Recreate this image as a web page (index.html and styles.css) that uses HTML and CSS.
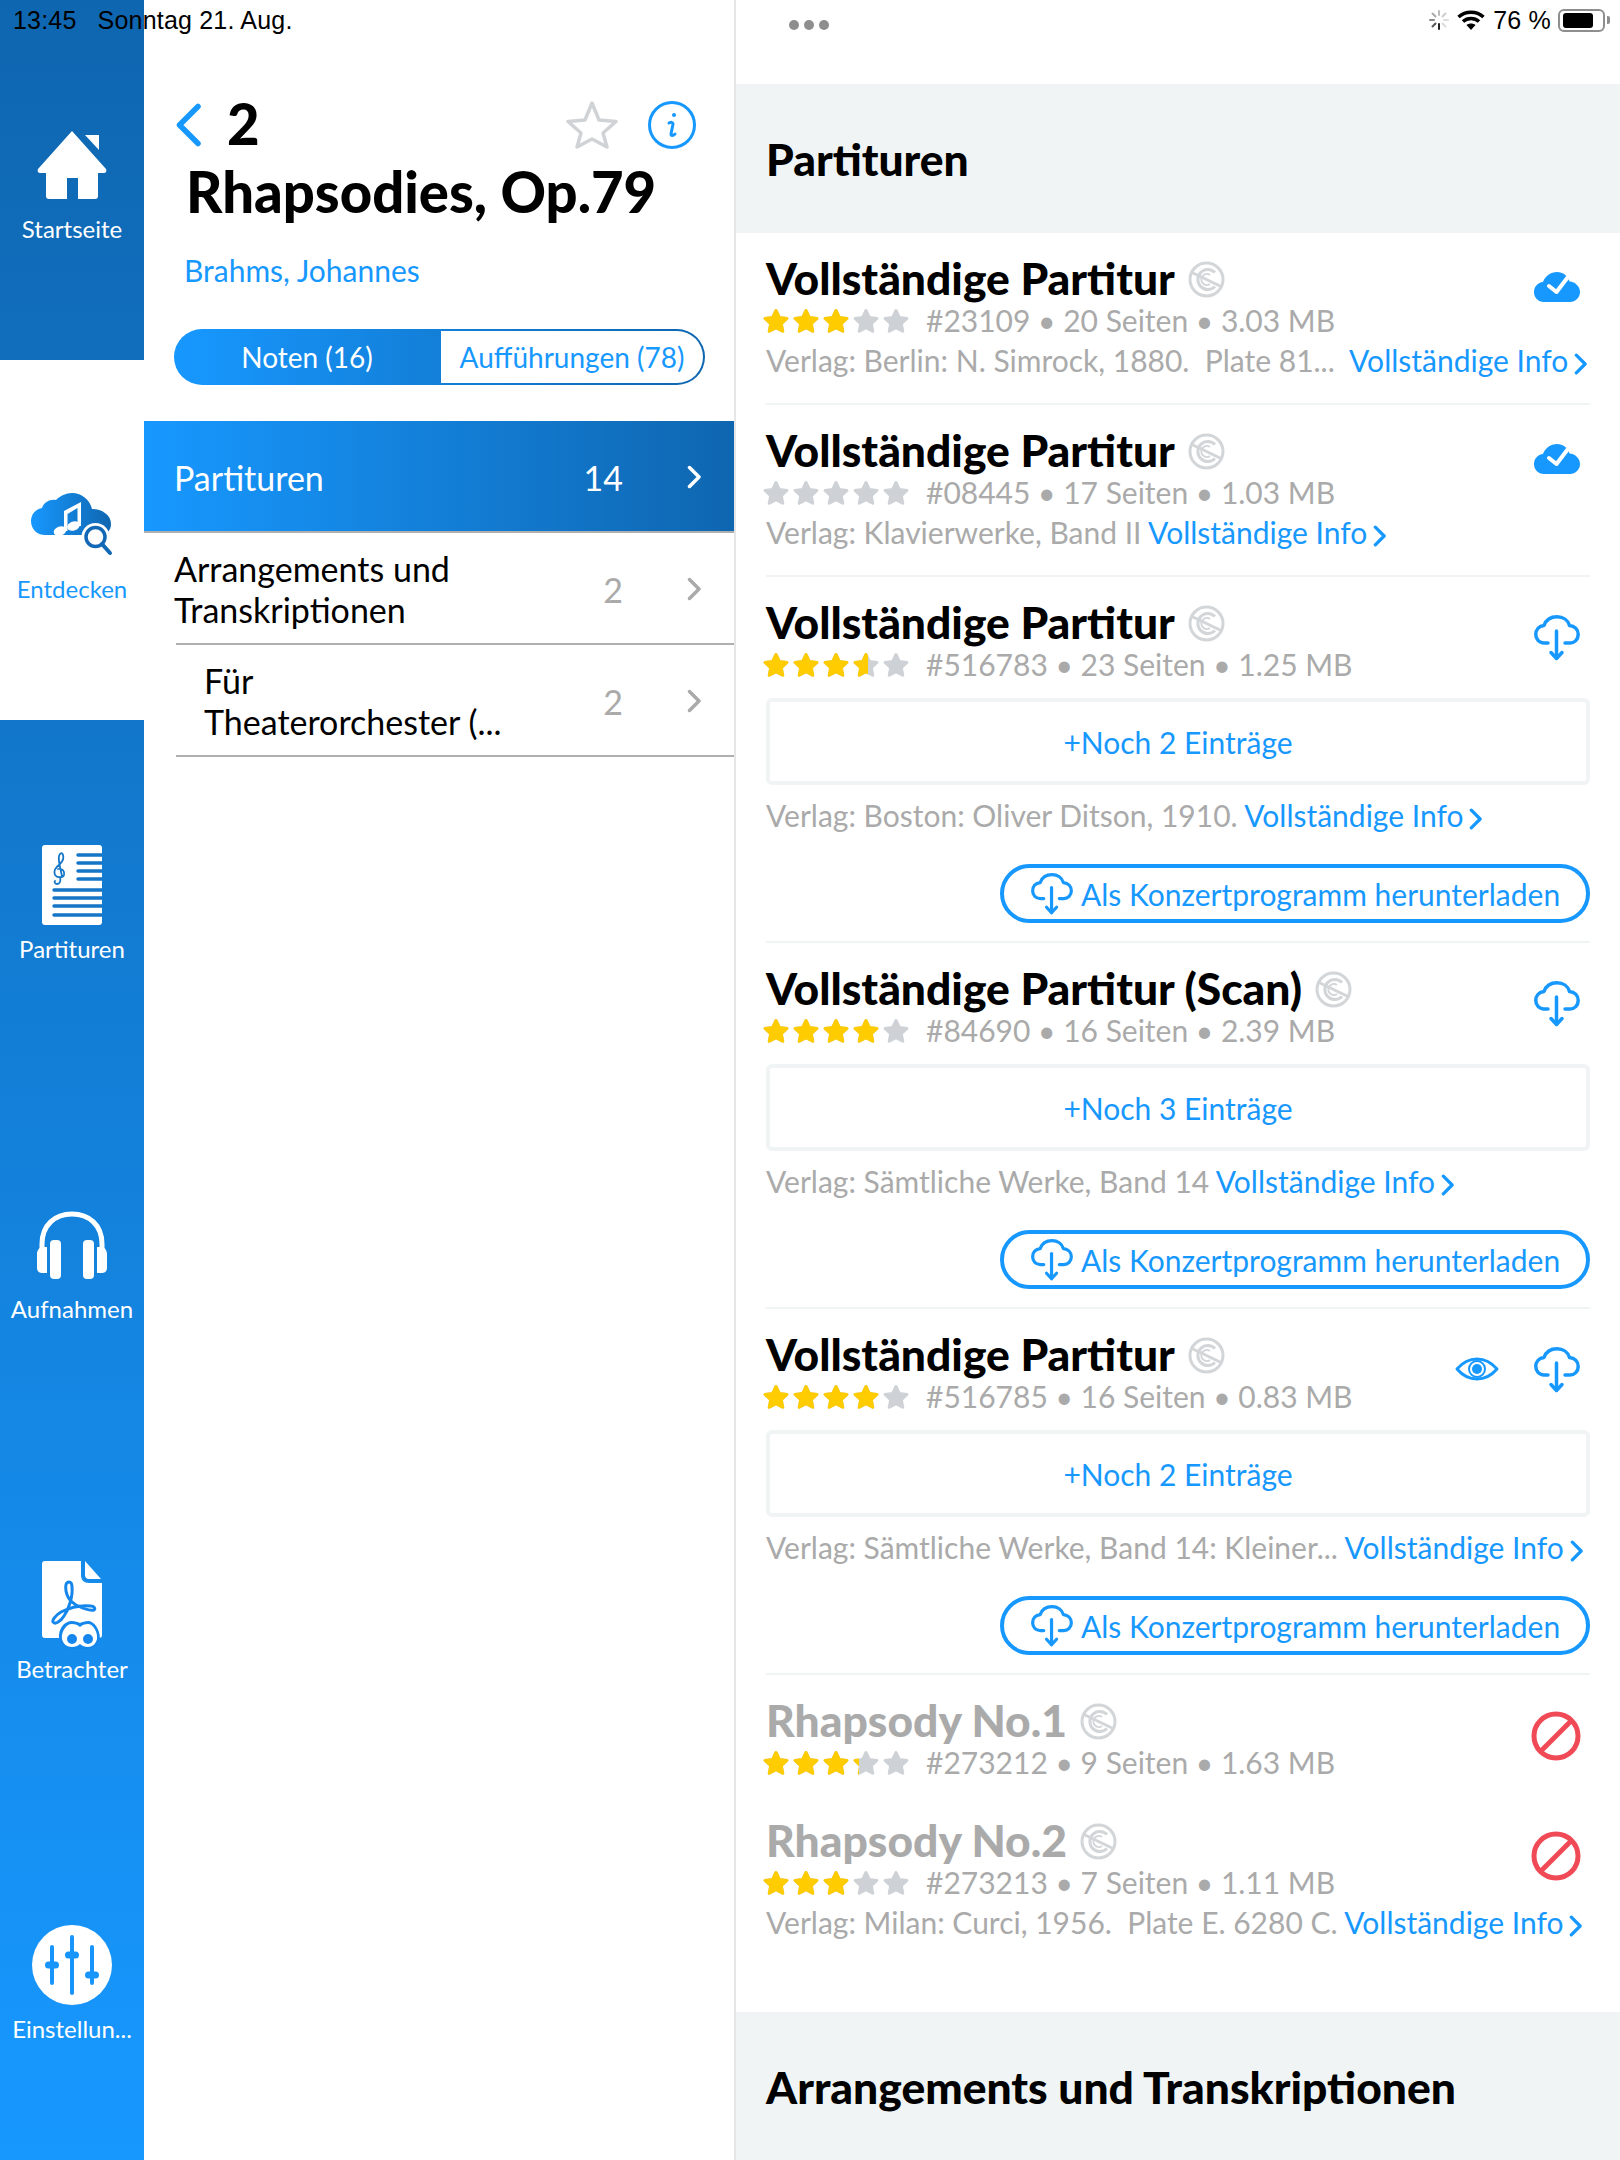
FILE: index.html
```html
<!DOCTYPE html>
<html lang="de">
<head>
    <meta charset="UTF-8">
    <meta name="viewport" content="width=device-width, initial-scale=1.0">
    <title>Rhapsodies, Op.79</title>
    <link rel="stylesheet" href="styles.css">
</head>
<body>
    <svg class="defs" width="0" height="0">
        <defs>
            <symbol id="star-row" viewBox="0 0 146 26">
                <g stroke="currentColor" stroke-width="3" stroke-linejoin="round">
                    <path d="M13 2.500l3.300 6.970 7.600.98-5.600 5.250 1.460 7.600L13 19.600l-6.760 3.700 1.460-7.600-5.640-5.250 7.640-.98z" />
                    <path d="M43 2.500l3.300 6.970 7.600.98-5.600 5.250 1.460 7.600L43 19.600l-6.760 3.700 1.460-7.600-5.640-5.250 7.640-.98z" />
                    <path d="M73 2.500l3.300 6.970 7.600.98-5.600 5.250 1.460 7.600L73 19.600l-6.760 3.700 1.460-7.600-5.640-5.250 7.640-.98z" />
                    <path d="M103 2.500l3.300 6.970 7.600.98-5.600 5.250 1.460 7.600L103 19.600l-6.760 3.700 1.460-7.600-5.640-5.250 7.640-.98z" />
                    <path d="M133 2.500l3.300 6.970 7.600.98-5.600 5.250 1.460 7.600L133 19.600l-6.760 3.700 1.460-7.600-5.640-5.250 7.640-.98z" />
                </g>
            </symbol>
            <symbol id="cc" viewBox="0 0 37 37">
                <g fill="none" stroke="#d3d6d8" stroke-width="3">
                    <circle cx="18.500" cy="18.500" r="16.500" />
                    <path d="M27 11.500a10 10 0 1 0 0 14" />
                    <path d="M22 14a5.500 5.500 0 1 0 0 9" stroke-width="2" />
                    <path d="M4 11.500l29 14" />
                </g>
            </symbol>
            <symbol id="cloud-down" viewBox="0 0 46 46">
                <g fill="none" stroke="#1798ff" stroke-width="3.500" stroke-linecap="round" stroke-linejoin="round">
                    <path d="M14 28H10C5 28 1.800 24 1.800 19.500 1.800 14.500 5 11 10 10.500 12 5 17 1.800 23 1.800 29 1.800 34 5 35.500 10.500 40.500 11 44.200 14.500 44.200 19.500 44.200 24.500 40.500 28 36 28H31" />
                    <path d="M22.500 16V43" />
                    <path d="M17 37.500l5.500 6 5.500-6" />
                </g>
            </symbol>
            <symbol id="cloud-ok" viewBox="0 0 46 31">
                <path fill="#1798ff" d="M10 31C4 31 0 26.500 0 21 0 15.500 4 11.500 9 11 11 5 17 1 23 1 29 1 34 5 35.500 10.500 41.500 11 46 15.500 46 21 46 26.500 41.500 31 36 31z" />
                <path fill="none" stroke="#fff" stroke-width="4" stroke-linecap="round" stroke-linejoin="round" d="M15 15l7.500 6L37 2" />
            </symbol>
            <symbol id="no" viewBox="0 0 50 50">
                <g fill="none" stroke="#ef4a55" stroke-width="5">
                    <circle cx="25" cy="25" r="22" />
                    <path d="M10 40L40 10" />
                </g>
            </symbol>
            <symbol id="chev" viewBox="0 0 14 24">
                <path fill="none" stroke="currentColor" stroke-width="3.500" stroke-linecap="round" stroke-linejoin="round" d="M2.500 2.500L12 12l-9.500 9.500" />
            </symbol>
        </defs>
    </svg>

    <div class="status-left"><span>13:45</span><span>Sonntag 21. Aug.</span></div>

    <div class="app">
        <nav class="tabs">
            <div class="tab">
                <div class="tab-icon">
                    <svg width="70" height="68" viewBox="0 0 70 68">
                        <path fill="#fff" d="M35 0L69 38c1 2 0 4-2 4h-6v23c0 2-1 3-3 3H41V47H30v21H12c-2 0-3-1-3-3V42H3c-2 0-3-2-2-4z" />
                        <path fill="#fff" d="M48 4h14v15z" />
                    </svg>
                </div>
                <div class="tab-label">Startseite</div>
            </div>
            <div class="tab tab-active">
                <div class="tab-icon">
                    <svg width="82" height="64" viewBox="0 0 82 64">
                        <defs>
                            <linearGradient id="cloud-grad"><stop offset="0" stop-color="#1798ff" /><stop offset="1" stop-color="#0f66b0" /></linearGradient>
                        </defs>
                        <path fill="url(#cloud-grad)" d="M14 42C6 42 0 36 0 28 0 21 5 16 11 15 13 9 19 6 25 7 29 3 35 0 41 0 51 0 59 7 61 16 71 16 80 22 80 31 80 37 76 42 70 42z" />
                        <g fill="#fff">
                            <path d="M33 18L50 9V33H46.500V15L36.500 21V38H33z" />
                            <ellipse cx="42.500" cy="33" rx="6.500" ry="4.500" transform="rotate(-20 42.500 33)" />
                            <ellipse cx="29" cy="38" rx="6.500" ry="4.500" transform="rotate(-20 29 38)" />
                        </g>
                        <circle cx="64.500" cy="44" r="14" fill="#fff" />
                        <circle cx="64.500" cy="44" r="9.500" fill="none" stroke="#1268b4" stroke-width="3.500" />
                        <path d="M71 51l8 9" stroke="#1268b4" stroke-width="4" stroke-linecap="round" />
                    </svg>
                </div>
                <div class="tab-label">Entdecken</div>
            </div>
            <div class="tab">
                <div class="tab-icon">
                    <svg width="60" height="80" viewBox="0 0 60 80">
                        <rect width="60" height="80" rx="3" fill="#fff" />
                        <g fill="none" stroke="#1576c8" stroke-width="3.500" stroke-linecap="round">
                            <path d="M36 10H60M36 18H60M36 26H60M36 34H60M12 45H60M12 53H60M12 61H60M12 70H60" />
                        </g>
                        <path fill="none" stroke="#1576c8" stroke-width="1.800" stroke-linecap="round" d="M18 32c1 4 0 7-3 7-2 0-3-2-2-3M16 24c4-1 7 2 6 6-1 3-7 3-9 0-2-4 1-8 5-11 3-3 4-6 3-9-1-3-3-2-4 1-1 4 1 12 3 20" />
                    </svg>
                </div>
                <div class="tab-label">Partituren</div>
            </div>
            <div class="tab">
                <div class="tab-icon">
                    <svg width="70" height="68" viewBox="0 0 70 68">
                        <path fill="none" stroke="#fff" stroke-width="5" d="M5 38V33C5 14 18 3 35 3s30 11 30 30v5" />
                        <rect x="13" y="29" width="11" height="39" rx="4" fill="#fff" />
                        <rect x="46" y="29" width="11" height="39" rx="4" fill="#fff" />
                        <path fill="#fff" d="M10 36v26H5c-3 0-5-2-5-5V43c0-3 2-7 5-7zM60 36v26h5c3 0 5-2 5-5V43c0-3-2-7-5-7z" />
                    </svg>
                </div>
                <div class="tab-label">Aufnahmen</div>
            </div>
            <div class="tab">
                <div class="tab-icon">
                    <svg width="60" height="88" viewBox="0 0 60 88">
                        <path fill="#fff" d="M3 0H39V14c0 5 3 8 8 8H60V74c0 2-1 3-3 3H3c-2 0-3-1-3-3V3C0 1 1 0 3 0z" />
                        <path fill="#fff" d="M43 0L59 18H47c-3 0-4-2-4-4z" />
                        <path fill="none" stroke="#1587ec" stroke-width="3" stroke-linejoin="round" d="M27 21c-3 0-4 4-3 9 1 6 5 11 10 14 6 3 14 6 18 5 2-1 0-4-3-4-8-1-20 1-30 6-5 3-9 8-8 10 2 3 8-1 11-6 5-7 9-20 8-29 0-3-1-5-3-5z" />
                        <path fill="#1587ec" d="M17 78c-1-10 5-18 13-18 3 0 6 1 8 2 2-1 5-2 8-2 6 0 12 8 12 18 0 6-6 10-12 10H29c-6 0-12-4-12-10z" />
                        <path fill="#fff" d="M20 78c-1-7 4-15 10-15 3 0 6 1 8 3 2-2 5-3 8-3 5 0 10 8 9 15-1 5-5 8-9 8-3 0-6-1-8-3-2 2-5 3-8 3-5 0-9-3-10-8z" />
                        <circle cx="30" cy="78" r="5" fill="#1587ec" />
                        <circle cx="46" cy="78" r="5" fill="#1587ec" />
                    </svg>
                </div>
                <div class="tab-label">Betrachter</div>
            </div>
            <div class="tab">
                <div class="tab-icon">
                    <svg width="80" height="80" viewBox="0 0 80 80">
                        <circle cx="40" cy="40" r="40" fill="#fff" />
                        <g stroke="#1795fa" stroke-width="4" stroke-linecap="round">
                            <path d="M20 22V58M40 12V68M60 22V58" />
                            <path d="M16.500 40H23.500M36.500 30H43.500M56.500 50H63.500" stroke-width="7" />
                        </g>
                    </svg>
                </div>
                <div class="tab-label">Einstellun...</div>
            </div>
        </nav>

        <aside class="detail">
            <div class="detail-top">
                <svg class="back" width="26" height="44" viewBox="0 0 26 44">
                    <path fill="none" stroke="#1798ff" stroke-width="5.500" stroke-linecap="round" stroke-linejoin="round" d="M22 3.500L3.500 22 22 40.500" />
                </svg>
                <div class="detail-num">2</div>
                <svg class="fav" width="52" height="48" viewBox="0 0 52 48">
                    <path fill="none" stroke="#d0d3d6" stroke-width="3.500" stroke-linejoin="round" d="M26 2l7 17 17 1.500-13 11.500 4 14-15-8-15 8 4-14L2 20.500 19 19z" />
                </svg>
                <svg width="48" height="48" viewBox="0 0 48 48">
                    <circle cx="24" cy="24" r="22.500" fill="none" stroke="#1798ff" stroke-width="3" />
                    <circle cx="26" cy="14" r="2" fill="#1798ff" />
                    <path fill="none" stroke="#1798ff" stroke-width="3" stroke-linecap="round" d="M21 22c2-1 4-1 4 1l-2 10c0 2 2 2 4 0" />
                </svg>
            </div>
            <h1 class="detail-title">Rhapsodies, Op.79</h1>
            <div class="detail-author">Brahms, Johannes</div>
            <div class="segment">
                <div class="seg-on">Noten (16)</div>
                <div class="seg-off">Aufführungen (78)</div>
            </div>
            <div class="cat-list">
                <div class="cat cat-active">
                    <div class="cat-name">Partituren</div>
                    <div class="cat-count">14</div>
                    <svg class="cat-chev" width="14" height="24"><use href="#chev" /></svg>
                </div>
                <div class="cat">
                    <div class="cat-name">Arrangements und<br>Transkriptionen</div>
                    <div class="cat-count">2</div>
                    <svg class="cat-chev" width="14" height="24"><use href="#chev" /></svg>
                </div>
                <div class="cat cat-sub">
                    <div class="cat-name">Für<br>Theaterorchester (...</div>
                    <div class="cat-count">2</div>
                    <svg class="cat-chev" width="14" height="24"><use href="#chev" /></svg>
                </div>
            </div>
        </aside>

        <main class="scores">
            <div class="topbar">
                <div class="dots"><i></i><i></i><i></i></div>
                <div class="status-right">
                    <svg width="20" height="20" viewBox="0 0 20 20">
                        <g stroke-width="2" stroke-linecap="round">
                            <path stroke="#222" d="M10 14v5" />
                            <path stroke="#555" d="M6.500 13.500L3.500 16.500" />
                            <path stroke="#888" d="M5 10H1" />
                            <path stroke="#aaa" d="M6.500 6.500L3.500 3.500" />
                            <path stroke="#bbb" d="M10 5V1" />
                            <path stroke="#ccc" d="M13.500 6.500l3-3" />
                            <path stroke="#ddd" d="M15 10h4" />
                            <path stroke="#ddd" d="M13.500 13.500l3 3" />
                        </g>
                    </svg>
                    <svg width="28" height="20" viewBox="0 0 28 20">
                        <g fill="none" stroke="#000" stroke-width="3.500">
                            <path d="M1.500 7c7-6.500 18-6.500 25 0" />
                            <path d="M6 11.500c4.500-4 11.500-4 16 0" />
                        </g>
                        <path d="M14 20l-4.500-5c2.500-2 6.500-2 9 0z" />
                    </svg>
                    <span class="batt-pct">76 %</span>
                    <div class="batt"><div class="batt-fill"></div></div>
                    <div class="batt-nub"></div>
                </div>
            </div>

            <h2 class="group-head">Partituren</h2>

            <section class="item">
                <div class="item-head">
                    <div class="item-main">
                        <div class="item-title"><span>Vollständige Partitur</span><svg width="37" height="37"><use href="#cc" /></svg></div>
                        <div class="item-meta">
                            <div class="stars"><svg width="146" height="26"><use href="#star-row" /></svg><div class="stars-on" style="width:60%"><svg width="146" height="26"><use href="#star-row" /></svg></div></div>
                            <span>#23109 • 20 Seiten • 3.03 MB</span>
                        </div>
                    </div>
                    <div class="item-actions"><svg width="46" height="31"><use href="#cloud-ok" /></svg></div>
                </div>
                <div class="item-pub">Verlag: Berlin: N. Simrock, 1880.  Plate 81...  <a class="more">Vollständige Info<svg width="13" height="24"><use href="#chev" /></svg></a></div>
            </section>

            <section class="item">
                <div class="item-head">
                    <div class="item-main">
                        <div class="item-title"><span>Vollständige Partitur</span><svg width="37" height="37"><use href="#cc" /></svg></div>
                        <div class="item-meta">
                            <div class="stars"><svg width="146" height="26"><use href="#star-row" /></svg></div>
                            <span>#08445 • 17 Seiten • 1.03 MB</span>
                        </div>
                    </div>
                    <div class="item-actions"><svg width="46" height="31"><use href="#cloud-ok" /></svg></div>
                </div>
                <div class="item-pub">Verlag: Klavierwerke, Band II <a class="more">Vollständige Info<svg width="13" height="24"><use href="#chev" /></svg></a></div>
            </section>

            <section class="item item-tall">
                <div class="item-head">
                    <div class="item-main">
                        <div class="item-title"><span>Vollständige Partitur</span><svg width="37" height="37"><use href="#cc" /></svg></div>
                        <div class="item-meta">
                            <div class="stars"><svg width="146" height="26"><use href="#star-row" /></svg><div class="stars-on" style="width:72%"><svg width="146" height="26"><use href="#star-row" /></svg></div></div>
                            <span>#516783 • 23 Seiten • 1.25 MB</span>
                        </div>
                    </div>
                    <div class="item-actions"><svg width="46" height="46"><use href="#cloud-down" /></svg></div>
                </div>
                <div class="more-box">+Noch 2 Einträge</div>
                <div class="item-pub">Verlag: Boston: Oliver Ditson, 1910. <a class="more">Vollständige Info<svg width="13" height="24"><use href="#chev" /></svg></a></div>
                <div class="dl-row"><div class="dl-btn"><svg width="42" height="42"><use href="#cloud-down" /></svg>Als Konzertprogramm herunterladen</div></div>
            </section>

            <section class="item item-tall">
                <div class="item-head">
                    <div class="item-main">
                        <div class="item-title"><span>Vollständige Partitur (Scan)</span><svg width="37" height="37"><use href="#cc" /></svg></div>
                        <div class="item-meta">
                            <div class="stars"><svg width="146" height="26"><use href="#star-row" /></svg><div class="stars-on" style="width:80%"><svg width="146" height="26"><use href="#star-row" /></svg></div></div>
                            <span>#84690 • 16 Seiten • 2.39 MB</span>
                        </div>
                    </div>
                    <div class="item-actions"><svg width="46" height="46"><use href="#cloud-down" /></svg></div>
                </div>
                <div class="more-box">+Noch 3 Einträge</div>
                <div class="item-pub">Verlag: Sämtliche Werke, Band 14 <a class="more">Vollständige Info<svg width="13" height="24"><use href="#chev" /></svg></a></div>
                <div class="dl-row"><div class="dl-btn"><svg width="42" height="42"><use href="#cloud-down" /></svg>Als Konzertprogramm herunterladen</div></div>
            </section>

            <section class="item item-tall">
                <div class="item-head">
                    <div class="item-main">
                        <div class="item-title"><span>Vollständige Partitur</span><svg width="37" height="37"><use href="#cc" /></svg></div>
                        <div class="item-meta">
                            <div class="stars"><svg width="146" height="26"><use href="#star-row" /></svg><div class="stars-on" style="width:80%"><svg width="146" height="26"><use href="#star-row" /></svg></div></div>
                            <span>#516785 • 16 Seiten • 0.83 MB</span>
                        </div>
                    </div>
                    <div class="item-actions">
                        <svg class="eye" width="44" height="24" viewBox="0 0 44 24">
                            <path fill="none" stroke="#1798ff" stroke-width="3" stroke-linejoin="round" d="M2 12C8 5 14 2 22 2s14 3 20 10c-6 7-12 10-20 10S8 19 2 12z" />
                            <circle cx="22" cy="12" r="8" fill="none" stroke="#1798ff" stroke-width="2" />
                            <circle cx="22" cy="12" r="5" fill="#1798ff" />
                        </svg>
                        <svg width="46" height="46"><use href="#cloud-down" /></svg>
                    </div>
                </div>
                <div class="more-box">+Noch 2 Einträge</div>
                <div class="item-pub">Verlag: Sämtliche Werke, Band 14: Kleiner... <a class="more">Vollständige Info<svg width="13" height="24"><use href="#chev" /></svg></a></div>
                <div class="dl-row"><div class="dl-btn"><svg width="42" height="42"><use href="#cloud-down" /></svg>Als Konzertprogramm herunterladen</div></div>
            </section>

            <section class="item item-off item-short">
                <div class="item-head">
                    <div class="item-main">
                        <div class="item-title"><span>Rhapsody No.1</span><svg width="37" height="37"><use href="#cc" /></svg></div>
                        <div class="item-meta">
                            <div class="stars"><svg width="146" height="26"><use href="#star-row" /></svg><div class="stars-on" style="width:66%"><svg width="146" height="26"><use href="#star-row" /></svg></div></div>
                            <span>#273212 • 9 Seiten • 1.63 MB</span>
                        </div>
                    </div>
                    <div class="item-actions item-actions-no"><svg width="50" height="50"><use href="#no" /></svg></div>
                </div>
            </section>

            <section class="item item-off item-last">
                <div class="item-head">
                    <div class="item-main">
                        <div class="item-title"><span>Rhapsody No.2</span><svg width="37" height="37"><use href="#cc" /></svg></div>
                        <div class="item-meta">
                            <div class="stars"><svg width="146" height="26"><use href="#star-row" /></svg><div class="stars-on" style="width:60%"><svg width="146" height="26"><use href="#star-row" /></svg></div></div>
                            <span>#273213 • 7 Seiten • 1.11 MB</span>
                        </div>
                    </div>
                    <div class="item-actions item-actions-no"><svg width="50" height="50"><use href="#no" /></svg></div>
                </div>
                <div class="item-pub">Verlag: Milan: Curci, 1956.  Plate E. 6280 C. <a class="more">Vollständige Info<svg width="13" height="24"><use href="#chev" /></svg></a></div>
            </section>

            <h2 class="group-head">Arrangements und Transkriptionen</h2>
        </main>
    </div>
</body>
</html>
```

FILE: styles.css
```css
* {
    box-sizing: border-box;
}
html, body {
    margin: 0;
    padding: 0;
    background-color: #fff;
}
body {
    font-family: Lato, "Open Sans", sans-serif;
    color: #000;
    width: 1620px;
    height: 2160px;
    overflow: hidden;
    position: relative;
}
.defs {
    position: absolute;
}
svg {
    display: block;
    flex: none;
}
.app {
    display: flex;
    height: 2160px;
}

/* status bar over the top */
.status-left {
    position: absolute;
    top: 6px;
    left: 13px;
    display: flex;
    gap: 21px;
    font-family: "Liberation Sans", Arial, sans-serif;
    font-size: 25px;
    line-height: 28px;
    letter-spacing: 0.2px;
}

/* left tab bar */
.tabs {
    width: 144px;
    flex: none;
    background: linear-gradient(to bottom, #0f66b0, #1798ff);
}
.tab {
    height: 360px;
    padding-top: 125px;
    color: #fff;
}
.tab-active {
    background-color: #fff;
    color: #1798ff;
}
.tab-icon {
    height: 80px;
    display: flex;
    align-items: center;
    justify-content: center;
}
.tab-label {
    font-size: 24px;
    line-height: 48px;
    text-align: center;
    white-space: nowrap;
}

/* middle column */
.detail {
    width: 592px;
    flex: none;
    padding-top: 100px;
    border-right: 2px solid #e4e6e8;
}
.detail-top {
    display: flex;
    align-items: center;
    height: 50px;
    padding: 0 38px 0 32px;
}
.detail-num {
    font-size: 56.200px;
    line-height: 48px;
    font-weight: 900;
    margin: -2px 0 0 25px;
    flex: 1;
}
.fav {
    margin-right: 30px;
}
.detail-title {
    margin: 7px 0 0 42px;
    font-size: 56.200px;
    line-height: 70px;
    font-weight: 900;
    white-space: nowrap;
}
.detail-author {
    margin: 23px 0 0 40px;
    font-size: 30px;
    line-height: 40px;
    color: #1798ff;
}
.segment {
    display: flex;
    height: 56px;
    margin: 39px 29px 0 30px;
    padding: 2px;
    border-radius: 28px;
    background: linear-gradient(to right, #1798ff, #0f66b0);
    font-size: 28px;
}
.seg-on {
    width: 265px;
    padding-right: 3px;
    color: #fff;
    display: flex;
    align-items: center;
    justify-content: center;
}
.seg-off {
    flex: 1;
    background-color: #fff;
    border-radius: 0 26px 26px 0;
    color: #1798ff;
    display: flex;
    align-items: center;
    justify-content: center;
}
.cat-list {
    margin-top: 36px;
}
.cat {
    display: flex;
    align-items: center;
    height: 112px;
    margin-left: 32px;
    border-bottom: 2px solid #b0b0b0;
    font-size: 34px;
    line-height: 41px;
}
.cat-active {
    margin-left: 0;
    padding-left: 32px;
    background: linear-gradient(to right, #1798ff, #0f66b0);
    color: #fff;
}
.cat-sub {
    padding-left: 30px;
}
.cat-name {
    flex: 1;
    margin-left: -2px;
    padding-top: 2px;
}
.cat-count {
    color: #aaa;
    width: 80px;
    padding-top: 2px;
    text-align: right;
    margin-right: 64px;
}
.cat-active .cat-count {
    color: #fff;
}
.cat-chev {
    margin: 2px 33px 0 0;
    color: #aaa;
}
.cat-active .cat-chev {
    color: #fff;
}

/* right column */
.scores {
    flex: 1;
    min-width: 0;
}
.topbar {
    height: 84px;
    display: flex;
    justify-content: space-between;
    align-items: flex-start;
    padding: 8px 10px 0 53px;
}
.dots {
    display: flex;
    gap: 5px;
    margin-top: 12px;
}
.dots i {
    width: 10px;
    height: 10px;
    border-radius: 50%;
    background-color: #8e8e8e;
}
.status-right {
    display: flex;
    align-items: center;
    height: 24px;
    font-family: "Liberation Sans", Arial, sans-serif;
    font-size: 25px;
    letter-spacing: 0.2px;
}
.status-right svg:first-child {
    margin-right: 8px;
}
.batt-pct {
    margin: 0 7px 0 8px;
}
.batt {
    width: 47px;
    height: 23px;
    padding: 2px 3px;
    border: 2px solid #8e8e8e;
    border-radius: 6px;
}
.batt-fill {
    width: 30px;
    height: 100%;
    background-color: #000;
    border-radius: 3px;
}
.batt-nub {
    width: 3px;
    height: 8px;
    background-color: #8e8e8e;
    border-radius: 0 2px 2px 0;
    margin-left: 2px;
}
.group-head {
    margin: 0;
    height: 149px;
    padding: 0 30px;
    background-color: #f0f4f5;
    display: flex;
    align-items: center;
    font-size: 44.400px;
    font-weight: 900;
    white-space: nowrap;
}
.item {
    margin: 0 30px;
    padding: 20px 0 24px;
    border-bottom: 2px solid #f0f4f5;
    height: 172px;
}
.item-tall {
    height: 366px;
    padding-bottom: 18px;
}
.item-short {
    height: 120px;
    border-bottom: none;
}
.item-last {
    height: 217px;
    border-bottom: none;
}
.item-head {
    display: flex;
    justify-content: space-between;
}
.item-title {
    display: flex;
    align-items: center;
    gap: 13px;
    height: 50px;
    font-size: 44.400px;
    font-weight: 900;
    white-space: nowrap;
}
.item-title span {
    margin-top: -2px;
}
.item-title svg {
    margin-top: 2px;
}
.item-off .item-title {
    color: #aaa;
}
.item-meta {
    display: flex;
    align-items: center;
    gap: 17px;
    height: 34px;
    margin: 0 0 4px -3px;
    font-size: 30px;
    color: #aaa;
    white-space: nowrap;
}
.stars {
    position: relative;
    width: 146px;
    height: 26px;
    margin-top: 2px;
    color: #ced2d6;
    fill: currentColor;
}
.stars-on {
    position: absolute;
    top: 0;
    left: 0;
    height: 26px;
    overflow: hidden;
    color: #ffcc00;
}
.item-actions {
    display: flex;
    align-items: flex-start;
    gap: 35px;
    padding: 18px 10px 0 0;
}
.item-actions-no {
    padding: 16px 9px 0 0;
}
.eye {
    margin-top: 10px;
}
.item-pub {
    font-size: 30px;
    line-height: 38px;
    color: #aaa;
    white-space: pre;
}
.more {
    color: #1798ff;
}
.more svg {
    display: inline-block;
    vertical-align: -4px;
    margin-left: 6px;
}
.more-box {
    margin: 13px 0 11px;
    height: 87px;
    border: 4px solid #f0f4f5;
    border-radius: 6px;
    display: flex;
    align-items: center;
    justify-content: center;
    font-size: 30px;
    color: #1798ff;
}
.dl-row {
    display: flex;
    justify-content: flex-end;
    margin-top: 30px;
}
.dl-btn {
    width: 590px;
    height: 59px;
    border: 4px solid #1798ff;
    border-radius: 30px;
    display: flex;
    align-items: center;
    padding-left: 27px;
    gap: 8px;
    font-size: 30px;
    color: #1798ff;
    white-space: nowrap;
}
```
